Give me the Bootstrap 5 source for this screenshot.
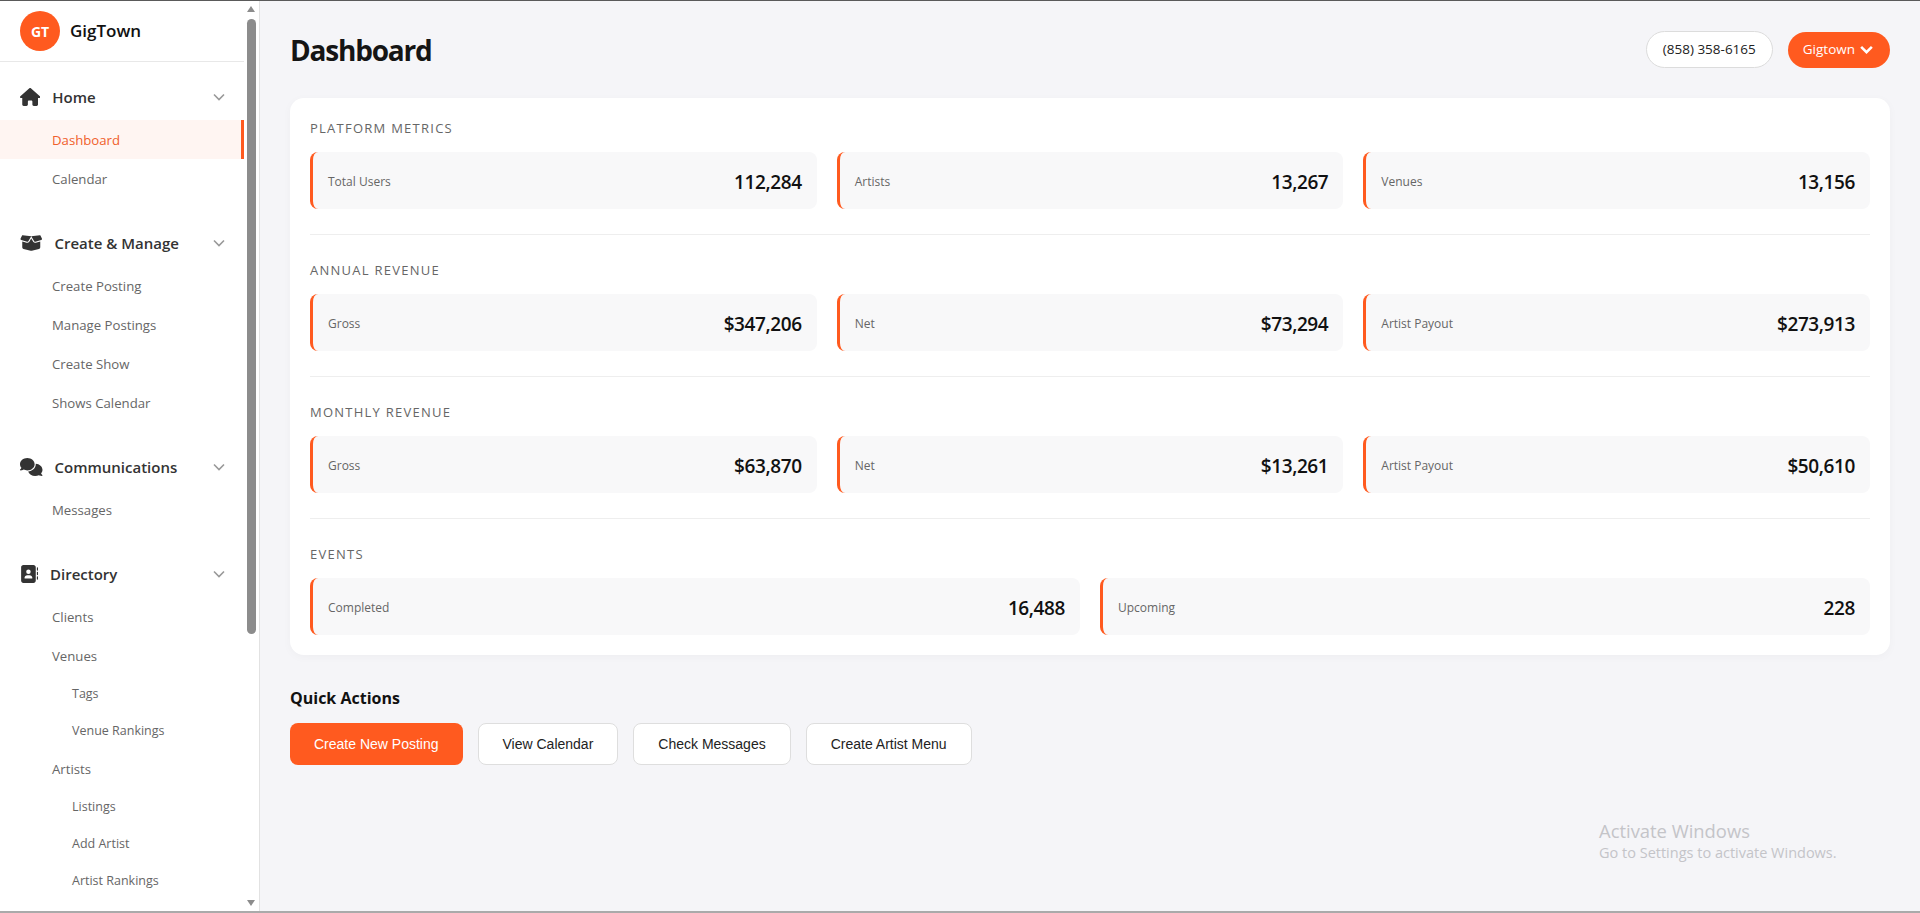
<!DOCTYPE html>
<html lang="en">
<head>
    <meta charset="UTF-8">
    <meta name="viewport" content="width=device-width, initial-scale=1.0">
    <title>GigTown Dashboard</title>
    <link href="https://cdn.jsdelivr.net/npm/bootstrap@5.3.0/dist/css/bootstrap.min.css" rel="stylesheet">
    <style>
        :root {
            --gt-orange: #ff5a1f;
            --gt-page: #f5f5f8;
        }

        html, body { height: 100%; overflow: hidden; }

        body {
            background: var(--gt-page);
            font-family: "Open Sans", "Noto Sans", sans-serif;
            color: #1a1a1a;
        }

        .app-shell {
            height: 913px;
            border-top: 1px solid #5a5a5a;
            border-bottom: 2px solid #aaa;
        }

        /* sidebar */
        .side-panel {
            width: 260px;
            flex: none;
            background: #fff;
            border-right: 1px solid #e2e2e2;
        }
        .side-inner { width: 244px; flex: none; overflow: hidden; }
        .side-brand {
            height: 61px;
            padding: 0 20px;
            gap: 10px;
            border-bottom: 1px solid #e8e8e8;
        }
        .brand-mark {
            width: 40px;
            height: 40px;
            border-radius: 50%;
            background: var(--gt-orange);
            color: #fff;
            font-size: 14px;
            font-weight: 700;
        }
        .brand-name { font-size: 17px; font-weight: 600; color: #111; }

        .side-nav { padding-top: 12px; }
        .side-group { margin-bottom: 22px; }
        .side-head {
            height: 46px;
            padding: 0 20px;
            gap: 12px;
            color: #333;
            font-size: 15px;
            font-weight: 600;
        }
        .side-head svg.ico { height: 18px; fill: #333; flex: none; }
        .side-head .chev { width: 14px; height: 14px; margin-left: auto; margin-right: -2px; fill: none; stroke: #999; stroke-width: 1.6; }
        .side-link {
            display: flex;
            align-items: center;
            height: 39px;
            padding: 2px 0 0 52px;
            font-size: 13.2px;
            color: #666;
            text-decoration: none;
        }
        .side-link.is-on {
            background: #fff5f2;
            color: #f0602c;
            border-right: 3px solid var(--gt-orange);
        }
        .side-sublink {
            display: flex;
            align-items: center;
            height: 37px;
            padding: 2px 0 0 72px;
            font-size: 12.5px;
            color: #666;
            text-decoration: none;
        }

        .fake-scroll { width: 15px; flex: none; padding: 5px 3px 5px; }
        .fake-thumb { width: 9px; height: 615px; border-radius: 5px; background: #8c8c8c; margin: 7px 0 0; }
        .arrow-up, .arrow-down { width: 0; height: 0; border-left: 4.5px solid transparent; border-right: 4.5px solid transparent; }
        .arrow-up { border-bottom: 6px solid #8c8c8c; }
        .arrow-down { border-top: 6px solid #8c8c8c; margin-top: auto; }

        /* main */
        .main-area { padding: 0 30px; min-width: 0; }
        .page-top { height: 97px; }
        .page-top-tools { gap: 15px; }
        .page-title { font-size: 28px; font-weight: 700; letter-spacing: -1.2px; color: #151515; margin: 0; padding-top: 3px; }
        .phone-pill {
            height: 37px;
            padding: 0 16px;
            border: 1px solid #dcdcdc;
            border-radius: 19px;
            background: #fff;
            font-size: 13.5px;
            color: #222;
        }
        .acct-btn {
            height: 36px;
            padding: 0 16px 0 15px;
            border: 0;
            border-radius: 18px;
            background: var(--gt-orange);
            color: #fff;
            font-size: 13.5px;
            font-family: inherit;
        }
        .acct-btn svg { width: 15px; height: 15px; fill: none; stroke: #fff; stroke-width: 2.4; }

        .metrics-panel {
            background: #fff;
            border-radius: 14px;
            padding: 20px;
            box-shadow: 0 2px 10px rgba(0,0,0,.03);
        }
        .metric-section { padding-bottom: 25px; margin-bottom: 25px; border-bottom: 1px solid #eee; }
        .metric-section:last-child { padding-bottom: 0; margin-bottom: 0; border-bottom: 0; }
        .metric-label {
            height: 20px;
            margin-bottom: 14px;
            font-size: 13px;
            line-height: 20px;
            letter-spacing: 1.25px;
            text-transform: uppercase;
            color: #666;
        }
        .metric-row { --bs-gutter-x: 20px; --bs-gutter-y: 0; }
        .metric-box {
            height: 57px;
            padding: 2px 15px 0;
            background: #f8f8f9;
            border-left: 3px solid var(--gt-orange);
            border-radius: 8px;
        }
        .metric-name { font-size: 12px; color: #666; }
        .metric-val { font-size: 19px; font-weight: 600; letter-spacing: -.4px; color: #111; padding-top: 2px; }

        .quick-title { font-size: 16px; font-weight: 700; color: #111; margin: 32px 0 14px; line-height: 22px; }
        .quick-actions { gap: 15px; }
        .quick-btn {
            height: 42px;
            padding: 0 24px;
            border: 1px solid #dedede;
            border-radius: 8px;
            background: #fff;
            color: #222;
            font-family: "Liberation Sans", Arial, sans-serif;
            font-size: 14px;
        }
        .quick-btn.is-primary { background: var(--gt-orange); border: 0; color: #fff; }

        .win-mark { position: absolute; left: 1599px; top: 817px; color: #c4c4c8; pointer-events: none; }
        .win-mark-a { font-size: 18.4px; line-height: 27px; }
        .win-mark-b { font-size: 14.5px; line-height: 18px; }
    </style>
</head>
<body>

<div class="app-shell d-flex">
    <aside class="side-panel d-flex">
        <div class="side-inner">
            <div class="side-brand d-flex align-items-center">
                <div class="brand-mark d-flex align-items-center justify-content-center">GT</div>
                <span class="brand-name">GigTown</span>
            </div>
            <nav class="side-nav">
                <div class="side-group">
                    <div class="side-head d-flex align-items-center">
                        <svg class="ico" viewBox="0 0 576 512"><path d="M575.8 255.5c0 18-15 32.1-32 32.1h-32l.7 160.2c0 2.7-.2 5.4-.5 8.1V472c0 22.1-17.9 40-40 40H456c-1.1 0-2.2 0-3.3-.1c-1.4 .1-2.8 .1-4.2 .1H416 392c-22.1 0-40-17.9-40-40V448 384c0-17.7-14.3-32-32-32H256c-17.7 0-32 14.3-32 32v64 24c0 22.1-17.9 40-40 40H160 128.1c-1.5 0-3-.1-4.5-.2c-1.2 .1-2.4 .2-3.6 .2H104c-22.1 0-40-17.9-40-40V360c0-.9 0-1.9 .1-2.8V287.6H32c-18 0-32-14-32-32.1c0-9 3-17 10-24L266.4 8c7-7 15-8 22-8s15 2 21 7L564.8 231.5c8 7 12 15 11 24z"/></svg>
                        <span>Home</span>
                        <svg class="chev" viewBox="0 0 14 14"><path d="M2 4.5l5 5 5-5"/></svg>
                    </div>
                    <a class="side-link is-on" href="#">Dashboard</a>
                    <a class="side-link" href="#">Calendar</a>
                </div>
                <div class="side-group">
                    <div class="side-head d-flex align-items-center">
                        <svg class="ico" viewBox="0 0 640 512"><path d="M58.9 42.1c3-6.1 9.6-9.6 16.3-8.7L320 64 564.8 33.4c6.7-.8 13.3 2.7 16.3 8.7l41.7 83.4c9 17.9-.6 39.6-19.8 45.1L439.6 217.3c-13.9 4-28.8-1.9-36.2-14.3L320 64 236.6 203c-7.4 12.4-22.3 18.3-36.2 14.3L37.1 170.6c-19.3-5.5-28.8-27.2-19.8-45.1L58.9 42.1zM321.1 128l54.9 91.4c14.9 24.8 44.6 36.6 72.5 28.6L576 211.6v167c0 22-15 41.2-36.4 46.6l-204.1 51c-10.2 2.6-20.9 2.6-31 0l-204.1-51C79 419.7 64 400.5 64 378.5v-167L191.6 248c27.8 8 57.6-3.8 72.5-28.6L318.9 128h2.2z"/></svg>
                        <span>Create &amp; Manage</span>
                        <svg class="chev" viewBox="0 0 14 14"><path d="M2 4.5l5 5 5-5"/></svg>
                    </div>
                    <a class="side-link" href="#">Create Posting</a>
                    <a class="side-link" href="#">Manage Postings</a>
                    <a class="side-link" href="#">Create Show</a>
                    <a class="side-link" href="#">Shows Calendar</a>
                </div>
                <div class="side-group">
                    <div class="side-head d-flex align-items-center">
                        <svg class="ico" viewBox="0 0 640 512"><path d="M208 352c114.9 0 208-78.8 208-176S322.9 0 208 0S0 78.8 0 176c0 38.6 14.7 74.3 39.6 103.4c-3.5 9.4-8.7 17.7-14.2 24.7c-4.8 6.2-9.7 11-13.3 14.3c-1.8 1.6-3.3 2.9-4.3 3.7c-.5 .4-.9 .7-1.1 .8l-.2 .2 0 0 0 0C1 327.2-1.4 334.4 .8 340.9S9.1 352 16 352c21.8 0 43.8-5.6 62.1-12.5c9.2-3.5 17.8-7.4 25.3-11.4C134.1 343.3 169.8 352 208 352zM448 176c0 112.3-99.1 196.9-216.5 207C255.8 457.4 336.4 512 432 512c38.2 0 73.9-8.7 104.7-23.9c7.5 4 16 7.9 25.2 11.4c18.3 6.9 40.3 12.5 62.1 12.5c6.9 0 13.1-4.5 15.2-11.1c2.1-6.6-.2-13.8-5.8-17.9l0 0 0 0-.2-.2c-.2-.2-.6-.4-1.1-.8c-1-.8-2.5-2-4.3-3.7c-3.6-3.3-8.5-8.1-13.3-14.3c-5.5-7-10.7-15.4-14.2-24.7c24.9-29 39.6-64.7 39.6-103.4c0-92.8-84.9-168.9-192.6-175.5c.4 5.1 .6 10.3 .6 15.5z"/></svg>
                        <span>Communications</span>
                        <svg class="chev" viewBox="0 0 14 14"><path d="M2 4.5l5 5 5-5"/></svg>
                    </div>
                    <a class="side-link" href="#">Messages</a>
                </div>
                <div class="side-group">
                    <div class="side-head d-flex align-items-center">
                        <svg class="ico" viewBox="0 0 512 512"><path d="M96 0C60.7 0 32 28.7 32 64V448c0 35.3 28.7 64 64 64H384c35.3 0 64-28.7 64-64V64c0-35.3-28.7-64-64-64H96zM208 288h64c44.2 0 80 35.8 80 80c0 8.8-7.2 16-16 16H144c-8.8 0-16-7.2-16-16c0-44.2 35.8-80 80-80zm-32-96a64 64 0 1 1 128 0 64 64 0 1 1 -128 0zM512 80c0-8.8-7.2-16-16-16s-16 7.2-16 16v64c0 8.8 7.2 16 16 16s16-7.2 16-16V80zM496 192c-8.8 0-16 7.2-16 16v64c0 8.8 7.2 16 16 16s16-7.2 16-16V208c0-8.8-7.2-16-16-16zm16 144c0-8.8-7.2-16-16-16s-16 7.2-16 16v64c0 8.8 7.2 16 16 16s16-7.2 16-16V336z"/></svg>
                        <span>Directory</span>
                        <svg class="chev" viewBox="0 0 14 14"><path d="M2 4.5l5 5 5-5"/></svg>
                    </div>
                    <a class="side-link" href="#">Clients</a>
                    <a class="side-link" href="#">Venues</a>
                    <a class="side-sublink" href="#">Tags</a>
                    <a class="side-sublink" href="#">Venue Rankings</a>
                    <a class="side-link" href="#">Artists</a>
                    <a class="side-sublink" href="#">Listings</a>
                    <a class="side-sublink" href="#">Add Artist</a>
                    <a class="side-sublink" href="#">Artist Rankings</a>
                </div>
            </nav>
        </div>
        <div class="fake-scroll d-flex flex-column">
            <div class="arrow-up"></div>
            <div class="fake-thumb"></div>
            <div class="arrow-down"></div>
        </div>
    </aside>

    <main class="main-area flex-grow-1">
        <div class="page-top d-flex align-items-center justify-content-between">
            <h1 class="page-title">Dashboard</h1>
            <div class="page-top-tools d-flex align-items-center">
                <div class="phone-pill d-flex align-items-center">(858) 358-6165</div>
                <button class="acct-btn d-flex align-items-center gap-1">Gigtown
                    <svg viewBox="0 0 14 14"><path d="M2 4.5l5 5 5-5"/></svg>
                </button>
            </div>
        </div>

        <div class="metrics-panel">
            <section class="metric-section">
                <div class="metric-label">Platform Metrics</div>
                <div class="row metric-row">
                    <div class="col-4"><div class="metric-box d-flex align-items-center justify-content-between"><span class="metric-name">Total Users</span><span class="metric-val">112,284</span></div></div>
                    <div class="col-4"><div class="metric-box d-flex align-items-center justify-content-between"><span class="metric-name">Artists</span><span class="metric-val">13,267</span></div></div>
                    <div class="col-4"><div class="metric-box d-flex align-items-center justify-content-between"><span class="metric-name">Venues</span><span class="metric-val">13,156</span></div></div>
                </div>
            </section>
            <section class="metric-section">
                <div class="metric-label">Annual Revenue</div>
                <div class="row metric-row">
                    <div class="col-4"><div class="metric-box d-flex align-items-center justify-content-between"><span class="metric-name">Gross</span><span class="metric-val">$347,206</span></div></div>
                    <div class="col-4"><div class="metric-box d-flex align-items-center justify-content-between"><span class="metric-name">Net</span><span class="metric-val">$73,294</span></div></div>
                    <div class="col-4"><div class="metric-box d-flex align-items-center justify-content-between"><span class="metric-name">Artist Payout</span><span class="metric-val">$273,913</span></div></div>
                </div>
            </section>
            <section class="metric-section">
                <div class="metric-label">Monthly Revenue</div>
                <div class="row metric-row">
                    <div class="col-4"><div class="metric-box d-flex align-items-center justify-content-between"><span class="metric-name">Gross</span><span class="metric-val">$63,870</span></div></div>
                    <div class="col-4"><div class="metric-box d-flex align-items-center justify-content-between"><span class="metric-name">Net</span><span class="metric-val">$13,261</span></div></div>
                    <div class="col-4"><div class="metric-box d-flex align-items-center justify-content-between"><span class="metric-name">Artist Payout</span><span class="metric-val">$50,610</span></div></div>
                </div>
            </section>
            <section class="metric-section">
                <div class="metric-label">Events</div>
                <div class="row metric-row">
                    <div class="col-6"><div class="metric-box d-flex align-items-center justify-content-between"><span class="metric-name">Completed</span><span class="metric-val">16,488</span></div></div>
                    <div class="col-6"><div class="metric-box d-flex align-items-center justify-content-between"><span class="metric-name">Upcoming</span><span class="metric-val">228</span></div></div>
                </div>
            </section>
        </div>

        <h2 class="quick-title">Quick Actions</h2>
        <div class="quick-actions d-flex">
            <button class="quick-btn is-primary">Create New Posting</button>
            <button class="quick-btn">View Calendar</button>
            <button class="quick-btn">Check Messages</button>
            <button class="quick-btn">Create Artist Menu</button>
        </div>
    </main>
</div>

<div class="win-mark">
    <div class="win-mark-a">Activate Windows</div>
    <div class="win-mark-b">Go to Settings to activate Windows.</div>
</div>

<script src="https://cdn.jsdelivr.net/npm/bootstrap@5.3.0/dist/js/bootstrap.bundle.min.js"></script>
</body>
</html>
